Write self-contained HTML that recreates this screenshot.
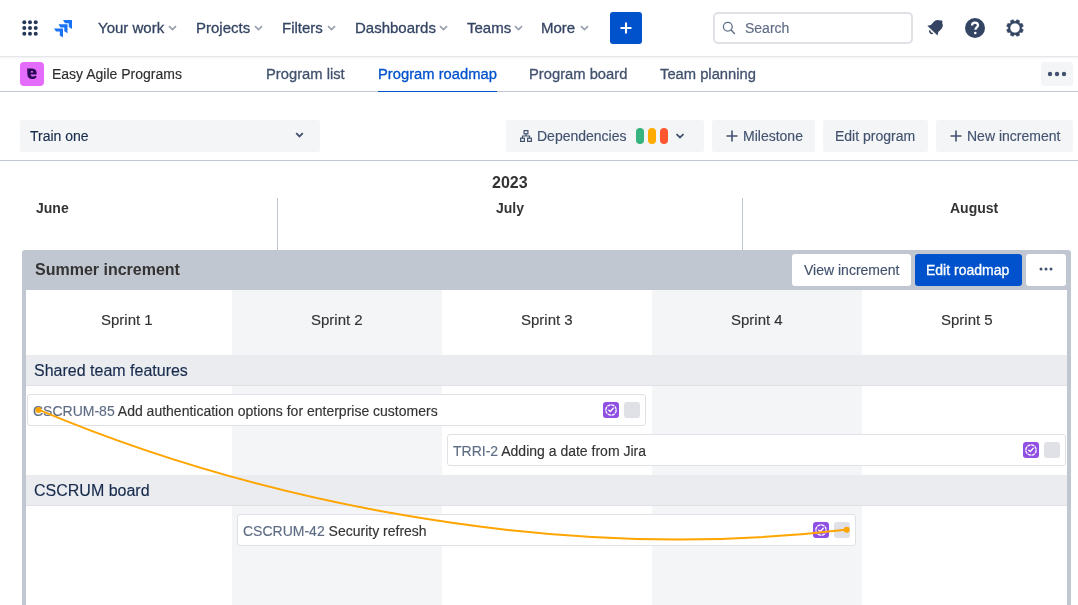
<!DOCTYPE html>
<html><head><meta charset="utf-8">
<style>
*{box-sizing:border-box;margin:0;padding:0}
html,body{width:1078px;height:605px;overflow:hidden;background:#fff;font-family:"Liberation Sans",sans-serif;position:relative}
.t{will-change:transform;-webkit-text-stroke:0.15px currentColor}
.a{position:absolute}
.t{position:absolute;white-space:nowrap;line-height:1}
.nav{font-size:15px;color:#344563;top:20.3px;-webkit-text-stroke:0.3px #344563}
.chev{position:absolute;top:25px;width:9px;height:6px}
.sub{font-size:14.75px;color:#42526E;top:66.8px;-webkit-text-stroke:0.3px currentColor}
.btn{position:absolute;top:120px;height:32px;background:#F4F5F7;border-radius:3px}
.bt{font-size:14px;color:#42526E;top:129.2px}
.col{position:absolute;top:290px;bottom:0;width:210px}
.band{position:absolute;left:26px;width:1041px;height:31px;background:#EBECF0;border-bottom:1px solid #DFE1E6}
.card{position:absolute;height:32px;background:#fff;border:1px solid #DFE1E6;border-radius:3px}
.key{color:#5E6C84}
.sum{color:#333}
.ct{font-size:14px}
.ep{position:absolute;width:16px;height:16px;background:#8F4FE2;border-radius:3px}
.ep svg{position:absolute;left:0;top:0}
.gs{position:absolute;width:16px;height:16px;background:#DFE1E6;border-radius:3px}
</style></head><body>

<!-- TOP NAV -->
<svg class="a" style="left:22px;top:20px" width="16" height="16" viewBox="0 0 16 16">
 <g fill="#253858">
  <circle cx="2.3" cy="2.3" r="2"/><circle cx="8" cy="2.3" r="2"/><circle cx="13.7" cy="2.3" r="2"/>
  <circle cx="2.3" cy="8" r="2"/><circle cx="8" cy="8" r="2"/><circle cx="13.7" cy="8" r="2"/>
  <circle cx="2.3" cy="13.7" r="2"/><circle cx="8" cy="13.7" r="2"/><circle cx="13.7" cy="13.7" r="2"/>
 </g>
</svg>
<svg class="a" style="left:54px;top:19px" width="19" height="19" viewBox="0 0 19 19">
 <defs><linearGradient id="jg" x1="0" y1="0" x2="1" y2="1"><stop offset="0" stop-color="#2684FF"/><stop offset="0.6" stop-color="#0065FF"/><stop offset="1" stop-color="#2684FF"/></linearGradient></defs>
 <g fill="#1A73F5">
  <path d="M9 1 H18 V10 L14.8 8 V4.2 H11 Z"/>
  <path d="M4.5 5.2 H13.5 V14.2 L10.3 12.2 V8.4 H6.5 Z"/>
  <path d="M0 9.4 H9 V18.4 L5.8 16.4 V12.6 H2 Z"/>
 </g>
</svg>

<div class="t nav" style="left:98px">Your work</div>
<div class="t nav" style="left:196px">Projects</div>
<div class="t nav" style="left:282px">Filters</div>
<div class="t nav" style="left:355px">Dashboards</div>
<div class="t nav" style="left:467px">Teams</div>
<div class="t nav" style="left:541px">More</div>
<svg class="chev" style="left:167.5px" viewBox="0 0 9 6"><path d="M1 1.2 L4.5 4.6 L8 1.2" fill="none" stroke="#97A0AF" stroke-width="1.7"/></svg>
<svg class="chev" style="left:254px" viewBox="0 0 9 6"><path d="M1 1.2 L4.5 4.6 L8 1.2" fill="none" stroke="#97A0AF" stroke-width="1.7"/></svg>
<svg class="chev" style="left:327px" viewBox="0 0 9 6"><path d="M1 1.2 L4.5 4.6 L8 1.2" fill="none" stroke="#97A0AF" stroke-width="1.7"/></svg>
<svg class="chev" style="left:439px" viewBox="0 0 9 6"><path d="M1 1.2 L4.5 4.6 L8 1.2" fill="none" stroke="#97A0AF" stroke-width="1.7"/></svg>
<svg class="chev" style="left:514px" viewBox="0 0 9 6"><path d="M1 1.2 L4.5 4.6 L8 1.2" fill="none" stroke="#97A0AF" stroke-width="1.7"/></svg>
<svg class="chev" style="left:580px" viewBox="0 0 9 6"><path d="M1 1.2 L4.5 4.6 L8 1.2" fill="none" stroke="#97A0AF" stroke-width="1.7"/></svg>

<div class="a" style="left:610px;top:12px;width:32px;height:32px;background:#0052CC;border-radius:3px"></div>
<svg class="a" style="left:618px;top:20px" width="16" height="16" viewBox="0 0 16 16"><path d="M8 3.3 V12.7 M3.3 8 H12.7" stroke="#fff" stroke-width="2.1" stroke-linecap="round"/></svg>

<div class="a" style="left:713px;top:12px;width:200px;height:32px;border:2px solid #DFE1E6;border-radius:5px;background:#fff"></div>
<svg class="a" style="left:722px;top:21px" width="14" height="14" viewBox="0 0 14 14"><circle cx="5.8" cy="5.8" r="4.4" fill="none" stroke="#5E6C84" stroke-width="1.3"/><path d="M9.1 9.1 L12.4 12.4" stroke="#5E6C84" stroke-width="1.4" stroke-linecap="round"/></svg>
<div class="t" style="left:745px;top:21.3px;font-size:14px;color:#5E6C84">Search</div>

<svg class="a" style="left:925px;top:18px" width="20" height="20" viewBox="0 0 20 20"><g transform="translate(0.6 -0.6) rotate(44 10 10) translate(10 10) scale(1.08) translate(-10 -10)"><path d="M10 2.6 C6.6 2.6 5.2 5 5.2 8 V11.4 L3.4 14.2 H16.6 L14.8 11.4 V8 C14.8 5 13.4 2.6 10 2.6 Z" fill="#344563"/><circle cx="10" cy="2.8" r="1.4" fill="#344563"/><path d="M8.2 15.6 A1.9 1.9 0 0 0 11.8 15.6" fill="none" stroke="#344563" stroke-width="1.5"/></g></svg>
<svg class="a" style="left:965px;top:18px" width="20" height="20" viewBox="0 0 20 20"><circle cx="10" cy="10" r="10" fill="#344563"/><path d="M7 7.6 C7 5.6 8.4 4.6 10 4.6 C11.8 4.6 13 5.7 13 7.3 C13 9.3 10.4 9.6 10.4 11.8" fill="none" stroke="#fff" stroke-width="2.2"/><circle cx="10.3" cy="15" r="1.3" fill="#fff"/></svg>
<svg class="a" style="left:1005px;top:18px" width="20" height="20" viewBox="0 0 20 20"><path fill="#344563" fill-rule="evenodd" stroke="#344563" stroke-width="0.6" stroke-linejoin="round" d="M16.66 10.76 L18.30 11.84 L17.17 14.57 L15.24 14.17 L14.17 15.24 L14.57 17.17 L11.84 18.30 L10.76 16.66 L9.24 16.66 L8.16 18.30 L5.43 17.17 L5.83 15.24 L4.76 14.17 L2.83 14.57 L1.70 11.84 L3.34 10.76 L3.34 9.24 L1.70 8.16 L2.83 5.43 L4.76 5.83 L5.83 4.76 L5.43 2.83 L8.16 1.70 L9.24 3.34 L10.76 3.34 L11.84 1.70 L14.57 2.83 L14.17 4.76 L15.24 5.83 L17.17 5.43 L18.30 8.16 L16.66 9.24 Z M10 5.0 A5 5 0 1 0 10.01 5.0 Z"/></svg>

<!-- nav bottom shadow -->
<div class="a" style="left:0;top:56px;width:1078px;height:1px;background:#E4E6EA"></div>
<div class="a" style="left:0;top:57px;width:1078px;height:2px;background:linear-gradient(#F1F2F4,#fff)"></div>

<!-- SUB NAV -->
<div class="a" style="left:20px;top:62px;width:24px;height:24px;background:#E46CFB;border-radius:4px"></div>
<svg class="a" style="left:27px;top:68px" width="10" height="11.5" viewBox="0 0 10 11.5"><path fill="#2A0A55" fill-rule="evenodd" d="M0.2 0.4 L5.2 0.6 C8.2 0.8 9.6 2.6 9.6 4.8 L9.6 6.6 L3.5 6.6 C3.7 8 4.6 8.6 5.7 8.6 C6.8 8.6 7.6 8.1 8.3 7.4 L9.7 9 C8.7 10.3 7.3 11.1 5.4 11.1 C2.2 11.1 0.4 9.2 0.4 6.2 Z M3.5 4.6 L6.4 4.6 C6.3 3.5 5.7 2.9 4.9 2.9 C4.1 2.9 3.6 3.5 3.5 4.6 Z"/></svg>
<div class="t" style="left:52px;top:67.1px;font-size:14px;color:#2E2E2E">Easy Agile Programs</div>
<div class="t sub" style="left:266px">Program list</div>
<div class="t sub" style="left:378px;color:#0052CC">Program roadmap</div>
<div class="t sub" style="left:529px">Program board</div>
<div class="t sub" style="left:660px">Team planning</div>
<div class="a" style="left:1041px;top:62px;width:32px;height:24px;background:#F4F5F7;border-radius:3px"></div>
<svg class="a" style="left:1047px;top:71px" width="20" height="6" viewBox="0 0 20 6"><g fill="#42526E"><circle cx="3" cy="3" r="2.2"/><circle cx="10" cy="3" r="2.2"/><circle cx="17" cy="3" r="2.2"/></g></svg>
<div class="a" style="left:0;top:91px;width:1078px;height:1px;background:#C1C7D0"></div>
<div class="a" style="left:378px;top:90.5px;width:119px;height:1.5px;background:#0052CC"></div>

<!-- TOOLBAR -->
<div class="btn" style="left:20px;width:300px"></div>
<div class="t" style="left:30px;top:129.2px;font-size:14px;color:#172B4D">Train one</div>
<svg class="a" style="left:295px;top:132px" width="9" height="6" viewBox="0 0 9 6"><path d="M1.2 1.2 L4.5 4.5 L7.8 1.2" fill="none" stroke="#42526E" stroke-width="1.8"/></svg>

<div class="btn" style="left:506px;width:198px"></div>
<svg class="a" style="left:520px;top:130px" width="12" height="12" viewBox="0 0 12 12"><g fill="none" stroke="#42526E" stroke-width="1.2"><rect x="4.1" y="0.6" width="3.8" height="3.2"/><rect x="0.6" y="8.2" width="3.8" height="3.2"/><rect x="7.6" y="8.2" width="3.8" height="3.2"/><path d="M6 3.8 V6 M2.5 8.2 V6 H9.5 V8.2"/></g></svg>
<div class="t bt" style="left:537px">Dependencies</div>
<div class="a" style="left:636px;top:128px;width:8px;height:16px;background:#36B37E;border-radius:4px"></div>
<div class="a" style="left:648px;top:128px;width:8px;height:16px;background:#FFAB00;border-radius:4px"></div>
<div class="a" style="left:660px;top:128px;width:8px;height:16px;background:#FF5630;border-radius:4px"></div>
<svg class="a" style="left:675px;top:133px" width="10" height="6" viewBox="0 0 10 6"><path d="M1.5 1.2 L5 4.5 L8.5 1.2" fill="none" stroke="#42526E" stroke-width="1.8"/></svg>

<div class="btn" style="left:712px;width:103px"></div>
<svg class="a" style="left:726px;top:130px" width="12" height="12" viewBox="0 0 12 12"><path d="M6 0.5 V11.5 M0.5 6 H11.5" stroke="#42526E" stroke-width="1.6"/></svg>
<div class="t bt" style="left:743px">Milestone</div>

<div class="btn" style="left:823px;width:105px"></div>
<div class="t bt" style="left:835px">Edit program</div>

<div class="btn" style="left:936px;width:137px"></div>
<svg class="a" style="left:950px;top:130px" width="12" height="12" viewBox="0 0 12 12"><path d="M6 0.5 V11.5 M0.5 6 H11.5" stroke="#42526E" stroke-width="1.6"/></svg>
<div class="t bt" style="left:967px">New increment</div>

<div class="a" style="left:0;top:160px;width:1078px;height:1px;background:#C1C7D0"></div>

<!-- TIMELINE HEADER -->
<div class="t" style="left:491.5px;top:174.9px;font-size:16px;font-weight:700;color:#333;-webkit-text-stroke:0">2023</div>
<div class="t" style="left:35.5px;top:201.2px;font-size:14px;font-weight:700;color:#333;-webkit-text-stroke:0">June</div>
<div class="t" style="left:495.5px;top:201.2px;font-size:14px;font-weight:700;color:#333;-webkit-text-stroke:0">July</div>
<div class="t" style="left:950px;top:201.2px;font-size:14px;font-weight:700;color:#333;-webkit-text-stroke:0">August</div>
<div class="a" style="left:277px;top:198px;width:1px;height:52px;background:#C1C7D0"></div>
<div class="a" style="left:742px;top:198px;width:1px;height:52px;background:#C1C7D0"></div>

<!-- INCREMENT -->
<div class="a" style="left:22px;top:250px;width:1049px;height:400px;background:#C1C7D0;border-radius:3px"></div>
<div class="a" style="left:26px;top:290px;width:1041px;height:400px;background:#fff;overflow:hidden">
  <div class="col" style="left:206px;top:0;background:#F4F5F7"></div>
  <div class="col" style="left:626px;top:0;background:#F4F5F7"></div>
</div>
<div class="t" style="left:35px;top:261.8px;font-size:16px;font-weight:700;color:#333;-webkit-text-stroke:0">Summer increment</div>
<div class="a" style="left:792px;top:254px;width:119px;height:32px;background:#fff;border-radius:3px"></div>
<div class="t" style="left:804px;top:263.1px;font-size:14px;color:#42526E">View increment</div>
<div class="a" style="left:915px;top:254px;width:107px;height:32px;background:#0052CC;border-radius:3px"></div>
<div class="t" style="left:926px;top:263.1px;font-size:14px;color:#fff;-webkit-text-stroke:0.3px #fff">Edit roadmap</div>
<div class="a" style="left:1026px;top:254px;width:40px;height:32px;background:#fff;border-radius:3px"></div>
<svg class="a" style="left:1039px;top:267px" width="14" height="4" viewBox="0 0 14 4"><g fill="#42526E"><circle cx="2" cy="2" r="1.5"/><circle cx="7" cy="2" r="1.5"/><circle cx="12" cy="2" r="1.5"/></g></svg>

<div class="t" style="left:101px;top:312.4px;font-size:15px;color:#333">Sprint 1</div>
<div class="t" style="left:311px;top:312.4px;font-size:15px;color:#333">Sprint 2</div>
<div class="t" style="left:521px;top:312.4px;font-size:15px;color:#333">Sprint 3</div>
<div class="t" style="left:731px;top:312.4px;font-size:15px;color:#333">Sprint 4</div>
<div class="t" style="left:941px;top:312.4px;font-size:15px;color:#333">Sprint 5</div>

<div class="band" style="top:355px"></div>
<div class="t" style="left:34px;top:363px;font-size:16px;color:#172B4D">Shared team features</div>

<div class="card" style="left:27px;top:394px;width:619px"></div>
<div class="t ct" style="left:33px;top:403.8px"><span class="key">CSCRUM-85</span> <span class="sum">Add authentication options for enterprise customers</span></div>
<div class="ep" style="left:603px;top:402px"><svg width="16" height="16" viewBox="0 0 16 16"><circle cx="8" cy="8" r="5.2" fill="none" stroke="#fff" stroke-width="1.3" stroke-dasharray="3.4 0.6"/><path d="M5.8 8.2 L7.3 9.6 L10.2 6.3" fill="none" stroke="#fff" stroke-width="1.4" stroke-linecap="round" stroke-linejoin="round"/></svg></div>
<div class="gs" style="left:624px;top:402px"></div>

<div class="card" style="left:447px;top:434px;width:619px"></div>
<div class="t ct" style="left:453px;top:444.2px"><span class="key">TRRI-2</span> <span class="sum">Adding a date from Jira</span></div>
<div class="ep" style="left:1023px;top:442px"><svg width="16" height="16" viewBox="0 0 16 16"><circle cx="8" cy="8" r="5.2" fill="none" stroke="#fff" stroke-width="1.3" stroke-dasharray="3.4 0.6"/><path d="M5.8 8.2 L7.3 9.6 L10.2 6.3" fill="none" stroke="#fff" stroke-width="1.4" stroke-linecap="round" stroke-linejoin="round"/></svg></div>
<div class="gs" style="left:1044px;top:442px"></div>

<div class="band" style="top:475px"></div>
<div class="t" style="left:34px;top:483px;font-size:16px;color:#172B4D">CSCRUM board</div>

<div class="card" style="left:237px;top:514px;width:619px"></div>
<div class="t ct" style="left:243px;top:523.8px"><span class="key">CSCRUM-42</span> <span class="sum">Security refresh</span></div>
<div class="ep" style="left:813px;top:522px"><svg width="16" height="16" viewBox="0 0 16 16"><circle cx="8" cy="8" r="5.2" fill="none" stroke="#fff" stroke-width="1.3" stroke-dasharray="3.4 0.6"/><path d="M5.8 8.2 L7.3 9.6 L10.2 6.3" fill="none" stroke="#fff" stroke-width="1.4" stroke-linecap="round" stroke-linejoin="round"/></svg></div>
<div class="gs" style="left:834px;top:522px"></div>

<!-- DEPENDENCY LINE -->
<svg class="a" style="left:0;top:0" width="1078" height="605" viewBox="0 0 1078 605">
 <path d="M38.5 409.6 C238.1 493.9 541.2 566.6 847.5 529.4" fill="none" stroke="#FFA500" stroke-width="2"/>
 <circle cx="38.4" cy="410.1" r="3" fill="#FFA500"/>
 <circle cx="846.7" cy="529.8" r="3" fill="#FFA500"/>
</svg>
</body></html>
